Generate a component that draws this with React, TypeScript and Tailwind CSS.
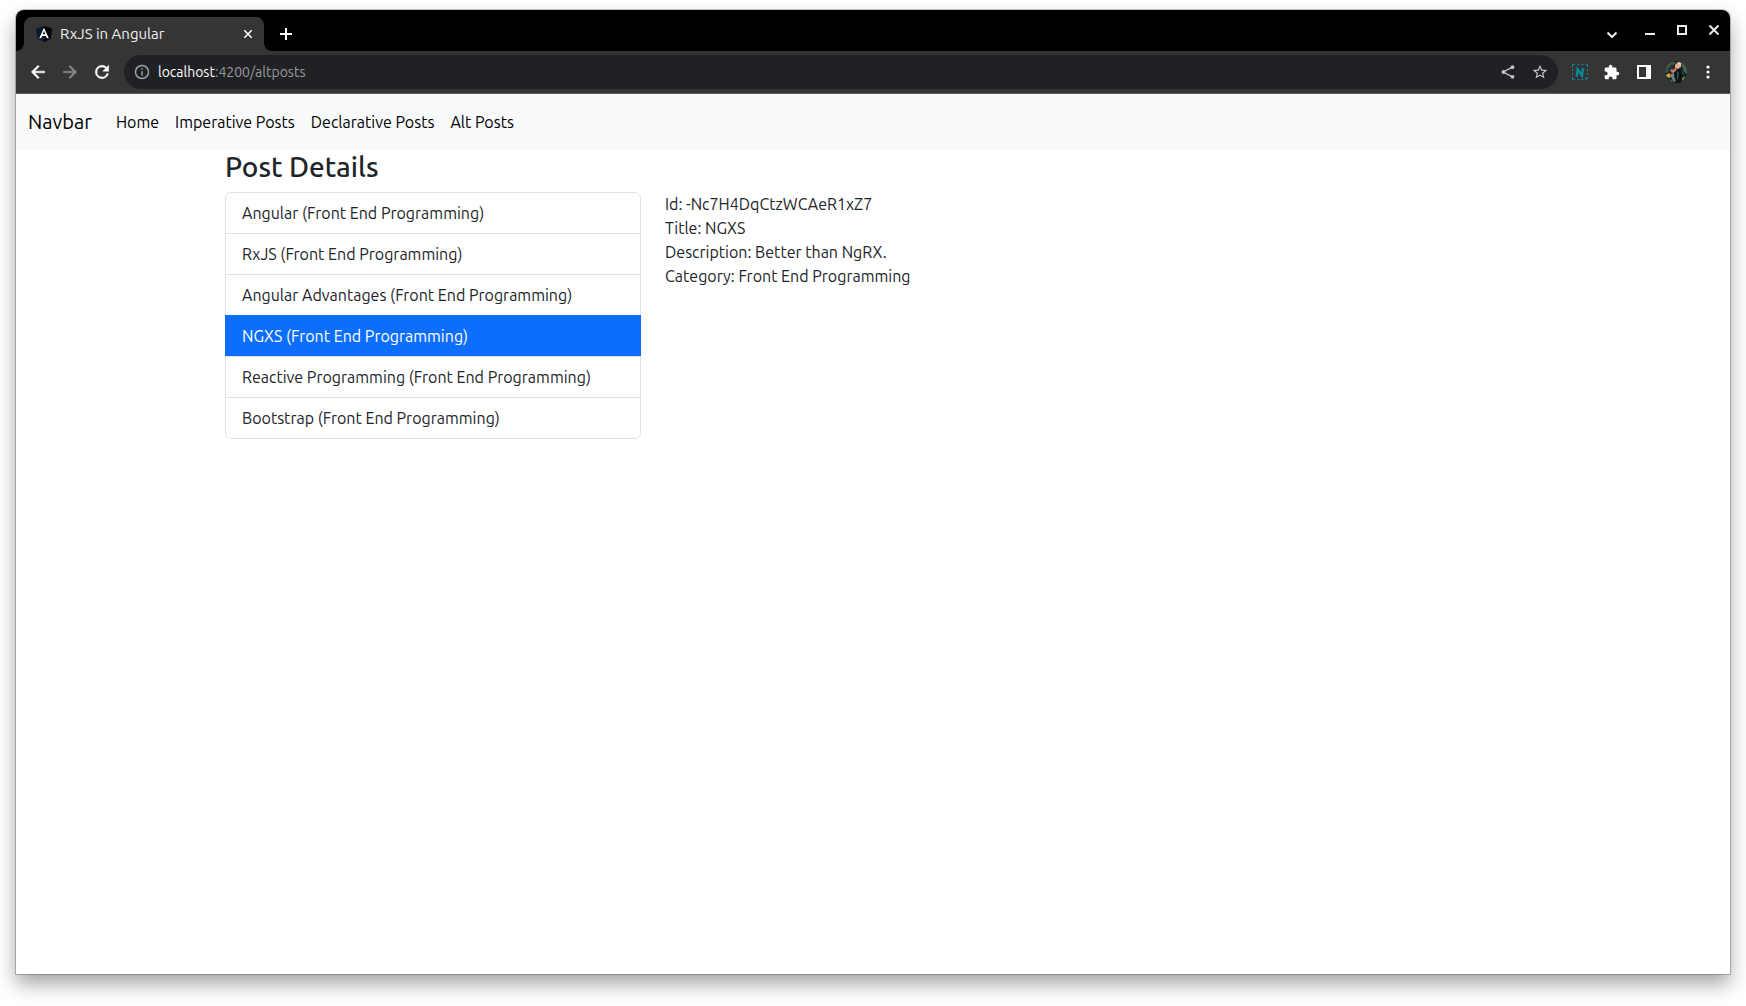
import React from 'react';

interface Post {
  id: string;
  title: string;
  category: string;
}

interface IconProps {
  className?: string;
}

const posts: Post[] = [
  { id: 'angular', title: 'Angular', category: 'Front End Programming' },
  { id: 'rxjs', title: 'RxJS', category: 'Front End Programming' },
  { id: 'advantages', title: 'Angular Advantages', category: 'Front End Programming' },
  { id: '-Nc7H4DqCtzWCAeR1xZ7', title: 'NGXS', category: 'Front End Programming' },
  { id: 'reactive', title: 'Reactive Programming', category: 'Front End Programming' },
  { id: 'bootstrap', title: 'Bootstrap', category: 'Front End Programming' },
];

const selectedPost = { ...posts[3], description: 'Better than NgRX.' };

const navLinks = ['Home', 'Imperative Posts', 'Declarative Posts', 'Alt Posts'];

const AngularIcon: React.FC<IconProps> = ({ className }) => (
  <svg className={className} viewBox="0 0 16 16" aria-hidden="true">
    <path d="M8 0 16 2.6 14.7 12.4 8 16 1.3 12.4 0 2.6Z" fill="#0c1a2b" />
    <path d="M8 0 16 2.6 14.7 12.4 8 16Z" fill="#02060d" />
    <path d="M8 1.8 3.2 12.3h1.9l1-2.4h3.8l1 2.4h1.9L8 1.8Zm1.3 6.5H6.7L8 5.1l1.3 3.2Z" fill="#fff" />
  </svg>
);

const BackIcon: React.FC<IconProps> = ({ className }) => (
  <svg className={className} viewBox="0 0 24 24" fill="currentColor" stroke="currentColor" strokeWidth=".6" aria-hidden="true">
    <path d="M20 11H7.83l5.59-5.59L12 4l-8 8 8 8 1.41-1.41L7.83 13H20v-2z" />
  </svg>
);

const ForwardIcon: React.FC<IconProps> = ({ className }) => (
  <svg className={className} viewBox="0 0 24 24" fill="currentColor" stroke="currentColor" strokeWidth=".6" aria-hidden="true">
    <path d="m12 4-1.41 1.41L16.17 11H4v2h12.17l-5.58 5.59L12 20l8-8z" />
  </svg>
);

const ReloadIcon: React.FC<IconProps> = ({ className }) => (
  <svg className={className} viewBox="0 0 24 24" fill="currentColor" stroke="currentColor" strokeWidth=".6" aria-hidden="true">
    <path d="M17.65 6.35A7.96 7.96 0 0 0 12 4a8 8 0 1 0 7.73 10h-2.08A6 6 0 1 1 12 6c1.66 0 3.14.69 4.22 1.78L13 11h7V4l-2.35 2.35z" />
  </svg>
);

const InfoIcon: React.FC<IconProps> = ({ className }) => (
  <svg className={className} viewBox="1 1 22 22" fill="currentColor" aria-hidden="true">
    <path d="M11 7h2v2h-2zm0 4h2v6h-2zm1-9a10 10 0 1 0 0 20 10 10 0 0 0 0-20zm0 18a8 8 0 1 1 0-16 8 8 0 0 1 0 16z" />
  </svg>
);

const ShareIcon: React.FC<IconProps> = ({ className }) => (
  <svg className={className} viewBox="0 0 14 14" aria-hidden="true">
    <path d="M11.5 2.2 2.2 7l9.3 4.8" fill="none" stroke="currentColor" strokeWidth="1.4" />
    <circle cx="11.5" cy="2.2" r="1.9" fill="currentColor" />
    <circle cx="2.4" cy="7" r="1.9" fill="currentColor" />
    <circle cx="11.5" cy="11.8" r="1.9" fill="currentColor" />
  </svg>
);

const StarIcon: React.FC<IconProps> = ({ className }) => (
  <svg className={className} viewBox="1 1 22 22" fill="currentColor" aria-hidden="true">
    <path d="m22 9.24-7.19-.62L12 2 9.19 8.63 2 9.24l5.46 4.73L5.82 21 12 17.27 18.18 21l-1.63-7.03L22 9.24zM12 15.4l-3.76 2.27 1-4.28-3.32-2.88 4.38-.38L12 6.1l1.71 4.04 4.38.38-3.32 2.88 1 4.28L12 15.4z" />
  </svg>
);

const CaptureIcon: React.FC<IconProps> = ({ className }) => (
  <svg className={className} viewBox="0 0 16 16" fill="none" stroke="#07899b" aria-hidden="true">
    <path d="M.5 3V.5H3M5.5.5h2M9.5.5h2M13.5.5h2V3M.5 5v2M.5 9v2M.5 13v2.5H3M5.5 15.5h2M9.5 15.5h2M15.5 5v2M15.5 9v2M14.5 13v3M13 14.500h3" />
    <path d="M4.800 12.500 5.600 5.200 10 11.500 11 4" strokeWidth="2.400" />
  </svg>
);

const PuzzleIcon: React.FC<IconProps> = ({ className }) => (
  <svg className={className} viewBox="1 0 23 23" fill="currentColor" aria-hidden="true">
    <path d="M20.5 11H19V7a2 2 0 0 0-2-2h-4V3.5a2.5 2.5 0 0 0-5 0V5H4a2 2 0 0 0-2 2v3.8h1.5a2.7 2.7 0 0 1 0 5.4H2V20c0 1.1.9 2 2 2h3.8v-1.5a2.7 2.7 0 0 1 5.4 0V22H17a2 2 0 0 0 2-2v-4h1.5a2.5 2.5 0 0 0 0-5z" />
  </svg>
);

const AvatarIcon: React.FC<IconProps> = ({ className }) => (
  <svg className={className} viewBox="0 0 22 22" aria-hidden="true">
    <clipPath id="avatar-clip">
      <circle cx="11" cy="11" r="11" />
    </clipPath>
    <g clipPath="url(#avatar-clip)">
      <path d="M0 0h22v22H0z" fill="#172327" />
      <path d="M0 3 8 0l3 2-5 5-2 4-4 1z" fill="#3d574c" />
      <path d="M2 9 7 3l2 1-5 7z" fill="#26382f" />
      <path d="m15 0 7 5v8l-3-2-2-6z" fill="#3f6550" />
      <path d="m10 4 3-3 3 1v4l-3 2-3-1z" fill="#e0ab90" />
      <path d="m13 1 3 1v3l-2-1z" fill="#f0cdb5" />
      <path d="m5 9 4-2 3 1-2 3-3 1z" fill="#c5796b" />
      <path d="m6 8 3-1 1 1-3 1z" fill="#5d2f2b" />
      <path d="m1 14 3-2 2 2-1 3-3-1z" fill="#d8a13a" />
      <path d="m6 13 3-1v4l2 4-2 1-3-5z" fill="#71838a" />
      <path d="m10 11 5-4 5 8-5 7h-4z" fill="#0c1419" />
      <path d="m12 10 2 2-1 6-1 1zM16 8l3 5-1 2z" fill="#35505f" />
      <path d="m17 17 3-2v2l-3 3z" fill="#6d8a3a" />
      <path d="m4 18 3 1 2 2H6z" fill="#49622f" />
    </g>
  </svg>
);

const TabStrip: React.FC = () => (
  <div className="flex h-[41px] items-end bg-black text-white">
    <div className="h-2 w-2 bg-[#353535]">
      <div className="h-2 w-2 rounded-br-lg bg-black" />
    </div>
    <div className="flex h-[34px] w-60 items-center rounded-t-lg bg-[#353535] pr-2 pl-3">
      <AngularIcon className="h-4 w-4" />
      <span className="ml-2 flex-1 text-[15px] text-[#f1f1f1]">RxJS in Angular</span>
      <button aria-label="Close tab" className="flex h-4 w-4 items-center justify-center">
        <svg className="h-2 w-2" viewBox="0 0 8 8" stroke="currentColor" strokeWidth="1.5" aria-hidden="true">
          <path d="m0 0 8 8M8 0 0 8" />
        </svg>
      </button>
    </div>
    <div className="h-2 w-2 bg-[#353535]">
      <div className="h-2 w-2 rounded-bl-lg bg-black" />
    </div>
    <button aria-label="New tab" className="ml-1 flex h-[34px] w-5 items-center justify-center">
      <svg className="h-3 w-3" viewBox="0 0 12 12" stroke="currentColor" strokeWidth="2" aria-hidden="true">
        <path d="M6 0v12M0 6h12" />
      </svg>
    </button>
    <div className="ml-auto flex h-full items-center gap-4 pr-2 pb-px text-[#e8eaed]">
      <button aria-label="Search tabs" className="mr-1 flex h-5 w-5 items-end justify-center">
        <svg className="h-[10px] w-[10px]" viewBox="0 0 10 10" fill="none" stroke="currentColor" strokeWidth="2" aria-hidden="true">
          <path d="m.5 2.5 4.5 4.5 4.5-4.5" />
        </svg>
      </button>
      <button aria-label="Minimize" className="flex h-4 w-4 items-center justify-center">
        <svg className="h-[10px] w-[10px]" viewBox="0 0 10 10" aria-hidden="true">
          <path d="M0 8h10v2H0z" fill="currentColor" />
        </svg>
      </button>
      <button aria-label="Maximize" className="flex h-4 w-4 items-center justify-center">
        <svg className="h-[10px] w-[10px]" viewBox="0 0 10 10" fill="none" stroke="currentColor" strokeWidth="2" aria-hidden="true">
          <path d="M1 1h8v8H1z" />
        </svg>
      </button>
      <button aria-label="Close window" className="flex h-4 w-4 items-center justify-center">
        <svg className="h-[10px] w-[10px]" viewBox="0 0 10 10" stroke="currentColor" strokeWidth="2" aria-hidden="true">
          <path d="m.5.5 9 9M9.5.5l-9 9" />
        </svg>
      </button>
    </div>
  </div>
);

const Toolbar: React.FC = () => (
  <div className="flex h-[43px] items-center border-b border-[#5c5c5c] bg-[#353535] px-3 text-white">
    <div className="flex items-center gap-3">
      <button aria-label="Back">
        <BackIcon className="h-5 w-5" />
      </button>
      <button aria-label="Forward" className="text-[#868686]">
        <ForwardIcon className="h-5 w-5" />
      </button>
      <button aria-label="Reload">
        <ReloadIcon className="h-5 w-5" />
      </button>
    </div>
    <div className="ml-3 flex h-[34px] flex-1 items-center rounded-full bg-[#202124] px-[10px] text-sm">
      <InfoIcon className="mr-2 h-4 w-4 text-[#9aa0a6]" />
      <label htmlFor="address">localhost</label>
      <input
        id="address"
        className="min-w-0 flex-1 bg-transparent text-[#9a9a9a] outline-none"
        defaultValue=":4200/altposts"
      />
      <button aria-label="Share" className="mr-4 flex h-4 w-4 items-center justify-center text-[#c4c4c4]">
        <ShareIcon className="h-[14px] w-[14px]" />
      </button>
      <button aria-label="Bookmark this tab" className="text-[#c4c4c4]">
        <StarIcon className="h-4 w-4" />
      </button>
    </div>
    <div className="ml-3 flex items-center gap-3">
      <button aria-label="Capture" className="flex h-5 w-5 items-center justify-center">
        <CaptureIcon className="h-4 w-4" />
      </button>
      <button aria-label="Extensions" className="flex h-5 w-5 items-center justify-center">
        <PuzzleIcon className="h-4 w-4" />
      </button>
      <button aria-label="Side panel" className="flex h-5 w-5 items-center justify-center">
        <svg className="h-[14px] w-[14px]" viewBox="0 0 14 14" fill="currentColor" aria-hidden="true">
          <path d="M0 0h14v14H0zM2 2v10h7V2z" fillRule="evenodd" />
        </svg>
      </button>
      <button aria-label="Profile" className="flex h-5 w-5 items-center justify-center">
        <AvatarIcon className="h-[22px] w-[22px] shrink-0" />
      </button>
      <button aria-label="Menu" className="flex h-5 w-5 items-center justify-center">
        <svg className="h-[14px] w-1" viewBox="0 0 4 14" fill="currentColor" aria-hidden="true">
          <circle cx="2" cy="2" r="1.6" />
          <circle cx="2" cy="7" r="1.6" />
          <circle cx="2" cy="12" r="1.6" />
        </svg>
      </button>
    </div>
  </div>
);

const Navbar: React.FC = () => (
  <nav className="flex h-14 items-center bg-[#f8f9fa] px-3 text-black">
    <a href="#" className="mr-4 text-xl">
      Navbar
    </a>
    <ul className="flex">
      {navLinks.map((link) => (
        <li key={link}>
          <a href="#" className="block p-2">
            {link}
          </a>
        </li>
      ))}
    </ul>
  </nav>
);

const PostList: React.FC = () => (
  <ul className="divide-y divide-[#dee2e6] rounded-md border border-[#dee2e6]">
    {posts.map((post) => (
      <li key={post.id}>
        <button
          className={
            post.id === selectedPost.id
              ? '-mx-px -mt-px block w-[calc(100%+2px)] border border-[#0d6efd] bg-[#0d6efd] px-4 pt-2 pb-[7px] text-left text-white'
              : 'block w-full px-4 py-2 text-left'
          }
        >
          {post.title} ({post.category})
        </button>
      </li>
    ))}
  </ul>
);

const App: React.FC = () => {
  return (
    <div className="flex min-h-screen flex-col overflow-hidden bg-white px-4 pt-[10px] pb-8 font-[Ubuntu,'Open_Sans',sans-serif] text-base text-[#212529]">
      <div className="flex flex-1 flex-col overflow-hidden rounded-t-lg bg-white shadow-[0_0_0_1px_rgba(0,0,0,0.22),0_10px_20px_rgba(0,0,0,0.36)]">
        <TabStrip />
        <Toolbar />
        <Navbar />
        <main className="mx-auto w-full max-w-[1320px] px-3">
          <h3 className="mb-2 text-[28px] leading-[34px] font-medium">Post Details</h3>
          <div className="grid grid-cols-3 gap-6">
            <PostList />
            <div className="col-span-2">
              <p>Id: {selectedPost.id}</p>
              <p>Title: {selectedPost.title}</p>
              <p>Description: {selectedPost.description}</p>
              <p>Category: {selectedPost.category}</p>
            </div>
          </div>
        </main>
      </div>
    </div>
  );
};

export default App;
